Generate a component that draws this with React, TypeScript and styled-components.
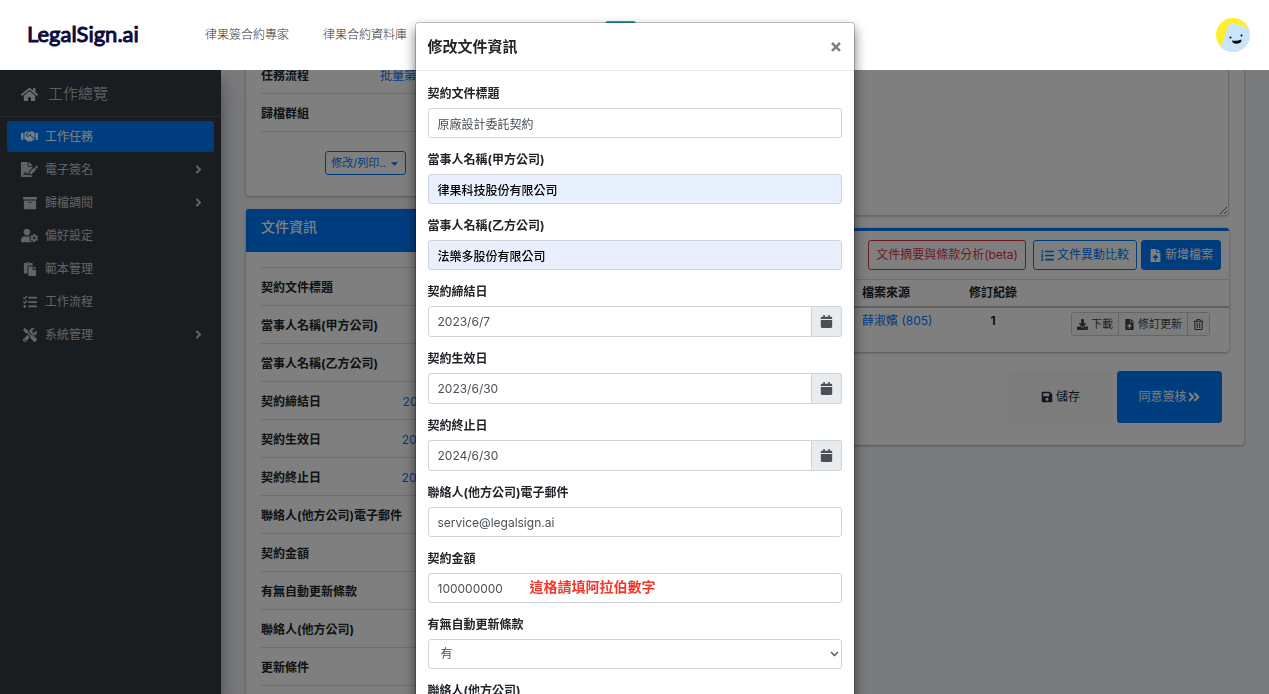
import React from 'react';
import styled, { createGlobalStyle, css } from 'styled-components';
import {
  FaAngleDoubleRight,
  FaAngleRight,
  FaArchive,
  FaCalendar,
  FaCaretDown,
  FaDownload,
  FaFileSignature,
  FaFileUpload,
  FaHandshake,
  FaHome,
  FaListOl,
  FaPaste,
  FaRegTrashAlt,
  FaSave,
  FaTasks,
  FaTools,
  FaUserCog,
} from 'react-icons/fa';
import type { IconType } from 'react-icons';

const blue = '#007bff';
const red = '#dc3545';
const line = 'rgba(0, 0, 0, 0.125)';
const ink = '#212529';

const GlobalStyle = createGlobalStyle`
  *, *::before, *::after { box-sizing: border-box; }
  body {
    margin: 0;
    overflow: hidden;
    color: ${ink};
    background: #f4f6f9;
    font: 12px/18px Inter, "Noto Sans CJK TC", sans-serif;
  }
  button, input, select, textarea { font: inherit; color: inherit; margin: 0; }
  button { cursor: pointer; }
  a { color: ${blue}; text-decoration: none; }
  ul, dl, dd, h1, h2, h3 { margin: 0; padding: 0; list-style: none; }
`;

const Page = styled.div`
  display: flex;
  flex-direction: column;
  height: 100vh;
  overflow: hidden;
`;

/* ---------- top bar ---------- */

const TopBar = styled.header`
  position: relative;
  z-index: 20;
  flex: none;
  display: flex;
  align-items: center;
  height: 70px;
  padding: 0 19px 0 27px;
  background: #fff;
`;

const Logo = styled.a`
  width: 178px;
  padding-bottom: 2px;
  color: #0b0b3c;
  font: 400 22px/28px Lato, sans-serif;
  -webkit-text-stroke: 1px #0b0b3c;
`;

const TopNav = styled.nav`
  display: flex;
  gap: 34px;
  margin-right: 198px;
  a {
    color: #333;
    font-weight: 300;
  }
`;

const TealButton = styled.button`
  width: 31px;
  height: 28px;
  border: 0;
  border-radius: 3px;
  background: #17a2b8;
`;

const Avatar = styled.svg`
  width: 34px;
  height: 34px;
  margin-left: auto;
`;

/* ---------- sidebar ---------- */

const Body = styled.div`
  flex: 1;
  display: flex;
  min-height: 0;
`;

const Sidebar = styled.aside`
  position: relative;
  z-index: 1;
  flex: none;
  width: 221px;
  background: #343a40;
  color: #c2c7d0;
  box-shadow: 0 14px 28px rgba(0, 0, 0, 0.25), 0 10px 10px rgba(0, 0, 0, 0.22);
`;

const Brand = styled.a`
  display: flex;
  align-items: center;
  gap: 10px;
  height: 47px;
  padding: 2px 0 0 21px;
  border-bottom: 1px solid #4b545c;
  color: rgba(255, 255, 255, 0.8);
  font-size: 15px;
  font-weight: 300;
  svg { font-size: 17px; }
`;

const Menu = styled.ul`
  padding: 4px 7px;
`;

const MenuItem = styled.li`
  margin-bottom: 2px;
`;

const MenuLink = styled.a<{ $active?: boolean }>`
  display: flex;
  align-items: center;
  gap: 7px;
  height: 31px;
  padding: 0 9px 0 14px;
  border-radius: 3px;
  color: ${(p) => (p.$active ? '#fff' : '#c2c7d0')};
  background: ${(p) => (p.$active ? blue : 'transparent')};
`;

const MenuIcon = styled.span<{ $wide?: boolean }>`
  display: flex;
  justify-content: center;
  width: 17px;
  font-size: ${(p) => (p.$wide ? 17 : 14)}px;
`;

const Chevron = styled(FaAngleRight)`
  margin-left: auto;
  font-size: 13px;
`;

/* ---------- page content ---------- */

const Main = styled.main`
  flex: 1;
  display: grid;
  grid-template-columns: 239px 1fr;
  gap: 15px;
  align-items: start;
  min-width: 0;
  padding: 0 25px;
  margin-top: -14px;
`;

const Column = styled.div`
  display: flex;
  flex-direction: column;
  gap: 13px;
`;

const Card = styled.section`
  border-radius: 3px;
  background: #fff;
  box-shadow: 0 0 1px rgba(0, 0, 0, 0.25), 0 1px 3px rgba(0, 0, 0, 0.3);
`;

const CardTitle = styled.h2`
  height: 43px;
  padding: 9px 15px;
  border-radius: 3px 3px 0 0;
  background: ${blue};
  color: #fff;
  font-size: 14px;
  font-weight: 500;
`;

const InfoList = styled.dl<{ $ruled?: boolean }>`
  margin: 0 15px;
  ${(p) =>
    p.$ruled &&
    css`
      margin-top: 15px;
      padding-bottom: 38px;
      border-top: 1px solid ${line};
    `}
`;

const InfoRow = styled.div`
  display: flex;
  align-items: center;
  justify-content: space-between;
  height: 38px;
  padding-top: 2px;
  border-bottom: 1px solid ${line};
  white-space: nowrap;
  dt { font-weight: 700; }
  dd { color: ${blue}; }
`;

const FlowName = styled.dd`
  width: 90px;
`;

const CardActions = styled.div`
  display: flex;
  justify-content: center;
  padding: 19px 0 21px;
`;

type Tone = 'primary' | 'outline' | 'danger' | 'light';

const tones = {
  primary: css`background: ${blue}; border-color: ${blue}; color: #fff;`,
  outline: css`background: transparent; border-color: ${blue}; color: ${blue};`,
  danger: css`background: transparent; border-color: ${red}; color: ${red};`,
  light: css`background: #f8f9fa; border-color: #f8f9fa; color: #1f2d3d;`,
};

const Button = styled.button<{ $tone: Tone; $size?: 'small' | 'large' }>`
  display: inline-flex;
  align-items: center;
  justify-content: center;
  gap: 3px;
  height: 30px;
  padding: 0 7px;
  border: 1px solid;
  border-radius: 3px;
  white-space: nowrap;
  ${(p) => tones[p.$tone]}
  ${(p) => p.$size === 'small' && css`height: 24px; padding: 0 5px; font-size: 11px;`}
  ${(p) => p.$size === 'large' && css`width: 105px; height: 52px;`}
  svg { flex: none; }
`;

const Workspace = styled(Card)`
  padding: 0 15px 22px;
`;

const Notes = styled.textarea`
  display: block;
  width: 100%;
  height: 160px;
  border: 1px solid #ced4da;
  border-radius: 3px;
  background: #fff;
  resize: vertical;
  box-shadow: 0 1px 2px rgba(0, 0, 0, 0.2);
`;

const FileCard = styled(Card)`
  margin-top: 12px;
  padding-bottom: 12px;
  border-top: 3px solid ${blue};
`;

const FileTools = styled.div`
  display: flex;
  justify-content: flex-end;
  gap: 4px;
  padding: 9px 8px;
  border-bottom: 1px solid ${line};
  ${Button}:first-child { margin-right: 3px; }
  svg { font-size: 13px; }
`;

const FileTable = styled.table`
  width: 100%;
  border-collapse: collapse;
  table-layout: fixed;
  th, td {
    padding: 4px 8px;
    text-align: left;
    vertical-align: top;
  }
  thead th { height: 26px; border-bottom: 2px solid ${line}; }
  .source { width: 106px; }
  .count { width: 66px; text-align: center; }
  .tools { width: 203px; padding: 4px 19px 4px 0; text-align: right; }
  th { white-space: nowrap; }
`;

const ButtonGroup = styled.div`
  display: inline-flex;
  border: 1px solid #ccc;
  border-radius: 3px;
`;

const GroupButton = styled.button`
  display: flex;
  align-items: center;
  gap: 3px;
  height: 22px;
  padding: 0 5px;
  border: 0;
  background: #f8f9fa;
  color: #444;
  font-size: 11px;
  white-space: nowrap;
  & + & { border-left: 1px solid #ccc; }
`;

const Footer = styled.div`
  display: flex;
  justify-content: flex-end;
  gap: 4px;
  padding: 19px 7px 0;
`;

const Approve = styled(Button)`
  gap: 0;
  svg { font-size: 14px; }
`;

/* ---------- dialog ---------- */

const Backdrop = styled.div`
  position: fixed;
  inset: 0;
  z-index: 10;
  background: rgba(0, 0, 0, 0.5);
`;

const DialogLayer = styled.div`
  position: fixed;
  inset: 0;
  z-index: 30;
  display: flex;
  justify-content: center;
  align-items: flex-start;
  padding-top: 22px;
  overflow: hidden;
`;

const Dialog = styled.section`
  width: 440px;
  border: 1px solid rgba(0, 0, 0, 0.2);
  border-radius: 4px;
  background: #fff;
  background-clip: padding-box;
  box-shadow: 0 6px 12px rgba(0, 0, 0, 0.5);
`;

const DialogHead = styled.header`
  display: flex;
  align-items: center;
  justify-content: space-between;
  height: 48px;
  padding: 0 12px;
  border-bottom: 1px solid #e9ecef;
  h2 {
    font-size: 15px;
    font-weight: 700;
  }
`;

const CloseButton = styled.button`
  padding: 0;
  width: 12px;
  border: 0;
  background: none;
  color: #7f7f7f;
  font-size: 19px;
  font-weight: 700;
`;

const Form = styled.form`
  padding: 13px 12px;
`;

const Field = styled.div`
  margin-bottom: 12px;
  label {
    display: block;
    margin-bottom: 4px;
    font-weight: 700;
    line-height: 20px;
  }
`;

const Control = styled.div`
  position: relative;
  display: flex;
`;

const TextInput = styled.input<{ $filled?: boolean; $joined?: boolean }>`
  flex: 1;
  min-width: 0;
  height: ${(p) => (p.$joined ? 31 : 30)}px;
  padding: 0 9px;
  border: 1px solid #ced4da;
  border-radius: ${(p) => (p.$joined ? '3px 0 0 3px' : '3px')};
  background: ${(p) => (p.$filled ? '#e8f0fe' : '#fff')};
  color: ${(p) => (p.$filled ? '#000' : '#495057')};
  font-weight: ${(p) => (p.$filled ? 500 : 400)};
`;

const DateButton = styled.button`
  display: flex;
  align-items: center;
  justify-content: center;
  width: 30px;
  padding: 0;
  border: 1px solid #ced4da;
  border-left: 0;
  border-radius: 0 3px 3px 0;
  background: #e9ecef;
  color: #495057;
  font-size: 13px;
`;

const Hint = styled.span`
  position: absolute;
  top: 5px;
  left: 102px;
  color: #f5372b;
  font-size: 14px;
  font-weight: 700;
`;

const Select = styled.select`
  flex: 1;
  height: 30px;
  padding: 0 12px;
  border: 1px solid #ced4da;
  border-radius: 3px;
  background: #fff;
  color: #495057;
  appearance: none;
`;

const SelectArrow = styled.svg`
  position: absolute;
  top: 11px;
  right: 3px;
  width: 9px;
  height: 8px;
  pointer-events: none;
`;

const menu: { icon: IconType; text: string; active?: boolean; tree?: boolean; wide?: boolean }[] = [
  { icon: FaHandshake, text: '工作任務', active: true, wide: true },
  { icon: FaFileSignature, text: '電子簽名', tree: true, wide: true },
  { icon: FaArchive, text: '歸檔調閱', tree: true },
  { icon: FaUserCog, text: '偏好設定', wide: true },
  { icon: FaPaste, text: '範本管理' },
  { icon: FaTasks, text: '工作流程' },
  { icon: FaTools, text: '系統管理', tree: true },
];

const info: [string, string?][] = [
  ['契約文件標題'],
  ['當事人名稱(甲方公司)'],
  ['當事人名稱(乙方公司)'],
  ['契約締結日', '2023/06/07'],
  ['契約生效日', '2023/06/30'],
  ['契約終止日', '2024/06/30'],
  ['聯絡人(他方公司)電子郵件'],
  ['契約金額'],
  ['有無自動更新條款'],
  ['聯絡人(他方公司)'],
  ['更新條件'],
];

type FieldData = {
  id: string;
  label: string;
  value?: string;
  kind?: 'date' | 'filled' | 'select';
  hint?: string;
};

const fields: FieldData[] = [
  { id: 'title', label: '契約文件標題', value: '原廠設計委託契約' },
  { id: 'partyA', label: '當事人名稱(甲方公司)', value: '律果科技股份有限公司', kind: 'filled' },
  { id: 'partyB', label: '當事人名稱(乙方公司)', value: '法樂多股份有限公司', kind: 'filled' },
  { id: 'signed', label: '契約締結日', value: '2023/6/7', kind: 'date' },
  { id: 'starts', label: '契約生效日', value: '2023/6/30', kind: 'date' },
  { id: 'ends', label: '契約終止日', value: '2024/6/30', kind: 'date' },
  { id: 'email', label: '聯絡人(他方公司)電子郵件', value: 'service@legalsign.ai' },
  { id: 'amount', label: '契約金額', value: '100000000', hint: '這格請填阿拉伯數字' },
  { id: 'renewal', label: '有無自動更新條款', value: '有', kind: 'select' },
  { id: 'contact', label: '聯絡人(他方公司)' },
];

function FormField({ id, label, value, kind, hint }: FieldData) {
  return (
    <Field>
      <label htmlFor={id}>{label}</label>
      <Control>
        {kind === 'select' ? (
          <>
            <Select id={id} defaultValue={value}>
              <option>{value}</option>
            </Select>
            <SelectArrow viewBox="0 0 9 8" fill="none" stroke="#495057" strokeWidth="1.3">
              <path d="M1 2l3.5 3.5L8 2" />
            </SelectArrow>
          </>
        ) : (
          <TextInput id={id} defaultValue={value} $filled={kind === 'filled'} $joined={kind === 'date'} />
        )}
        {kind === 'date' && (
          <DateButton type="button" aria-label={label}>
            <FaCalendar />
          </DateButton>
        )}
        {hint && <Hint>{hint}</Hint>}
      </Control>
    </Field>
  );
}

export default function App() {
  return (
    <Page>
      <GlobalStyle />
      <TopBar>
        <Logo href="#">LegalSign.ai</Logo>
        <TopNav>
          <a href="#">律果簽合約專家</a>
          <a href="#">律果合約資料庫</a>
        </TopNav>
        <TealButton type="button" />
        <Avatar viewBox="0 0 34 34">
          <clipPath id="face">
            <circle cx="17" cy="17" r="17" />
          </clipPath>
          <g clipPath="url(#face)">
            <rect width="34" height="34" fill="#ffee2e" />
            <rect x="13" y="4" width="36" height="40" rx="5" fill="#cbe4fd" transform="rotate(17 13 4)" />
            <circle cx="14.5" cy="19.5" r="1" />
            <circle cx="25.5" cy="17.5" r="1" />
            <path d="M16 22.5c3 .7 6.500 .3 9.500-1 .3 2.500-1.500 4-4.500 4.300-2.700.2-4.700-1-5-3.300z" />
          </g>
        </Avatar>
      </TopBar>

      <Body>
        <Sidebar>
          <Brand href="#">
            <FaHome />
            工作總覽
          </Brand>
          <Menu>
            {menu.map(({ icon: Icon, text, active, tree, wide }) => (
              <MenuItem key={text}>
                <MenuLink href="#" $active={active}>
                  <MenuIcon $wide={wide}>
                    <Icon />
                  </MenuIcon>
                  {text}
                  {tree && <Chevron />}
                </MenuLink>
              </MenuItem>
            ))}
          </Menu>
        </Sidebar>

        <Main>
          <Column>
            <Card>
              <InfoList>
                <InfoRow>
                  <dt>任務流程</dt>
                  <FlowName>批量第</FlowName>
                </InfoRow>
                <InfoRow>
                  <dt>歸檔群組</dt>
                </InfoRow>
              </InfoList>
              <CardActions>
                <Button type="button" $tone="outline" $size="small">
                  修改/列印.. <FaCaretDown />
                </Button>
              </CardActions>
            </Card>
            <Card>
              <CardTitle>文件資訊</CardTitle>
              <InfoList $ruled>
                {info.map(([name, value]) => (
                  <InfoRow key={name}>
                    <dt>{name}</dt>
                    {value && <dd>{value}</dd>}
                  </InfoRow>
                ))}
              </InfoList>
            </Card>
          </Column>

          <Workspace>
            <Notes aria-label="備註" />
            <FileCard>
              <FileTools>
                <Button type="button" $tone="danger">
                  文件摘要與條款分析(beta)
                </Button>
                <Button type="button" $tone="outline">
                  <FaListOl /> 文件異動比較
                </Button>
                <Button type="button" $tone="primary">
                  <FaFileUpload /> 新增檔案
                </Button>
              </FileTools>
              <FileTable>
                <thead>
                  <tr>
                    <th />
                    <th className="source">檔案來源</th>
                    <th className="count">修訂紀錄</th>
                    <th className="tools" />
                  </tr>
                </thead>
                <tbody>
                  <tr>
                    <td />
                    <td>
                      <a href="#">薛淑嬪 (805)</a>
                    </td>
                    <th className="count">1</th>
                    <td className="tools">
                      <ButtonGroup>
                        <GroupButton type="button">
                          <FaDownload /> 下載
                        </GroupButton>
                        <GroupButton type="button">
                          <FaFileUpload /> 修訂更新
                        </GroupButton>
                        <GroupButton type="button" aria-label="刪除">
                          <FaRegTrashAlt />
                        </GroupButton>
                      </ButtonGroup>
                    </td>
                  </tr>
                </tbody>
              </FileTable>
            </FileCard>
            <Footer>
              <Button type="button" $tone="light" $size="large">
                <FaSave /> 儲存
              </Button>
              <Approve type="button" $tone="primary" $size="large">
                同意簽核
                <FaAngleDoubleRight />
              </Approve>
            </Footer>
          </Workspace>
        </Main>
      </Body>

      <Backdrop />
      <DialogLayer>
        <Dialog role="dialog" aria-labelledby="dialog-title">
          <DialogHead>
            <h2 id="dialog-title">修改文件資訊</h2>
            <CloseButton type="button" aria-label="關閉">
              ×
            </CloseButton>
          </DialogHead>
          <Form>
            {fields.map((field) => (
              <FormField key={field.id} {...field} />
            ))}
          </Form>
        </Dialog>
      </DialogLayer>
    </Page>
  );
}
